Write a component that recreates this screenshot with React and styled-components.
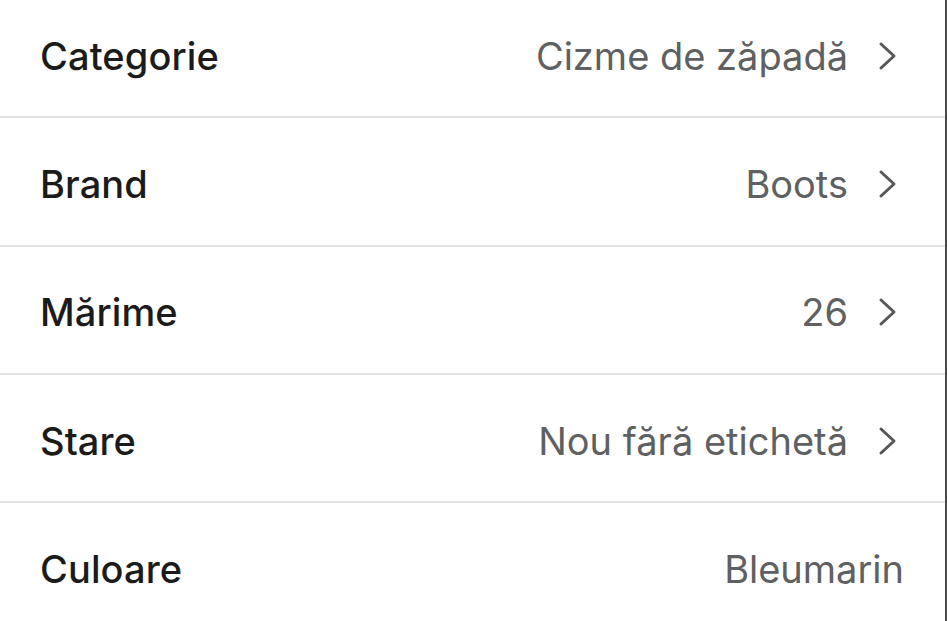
import React from 'react';
import styled, { createGlobalStyle } from 'styled-components';

const Global = createGlobalStyle`
  html, body {
    margin: 0;
    padding: 0;
    background: #ffffff;
    overflow: hidden;
  }
  body {
    font-family: Inter, "Noto Sans", "Liberation Sans", sans-serif;
  }
`;

const Screen = styled.div`
  width: 947px;
  height: 621px;
  overflow: hidden;
  background: #ffffff;
  border-right: 2px solid #4a4a4a;
  box-sizing: border-box;
`;

const List = styled.div`
  display: flex;
  flex-direction: column;
  margin-top: -10px;
`;

const Row = styled.div`
  display: flex;
  align-items: center;
  justify-content: space-between;
  box-sizing: border-box;
  height: 128.33px;
  padding: 5px ${(p) => (p.$arrow ? '48px' : '41px')} 0 40px;
  border-bottom: 2px solid ${(p) => (p.$last ? 'transparent' : '#e2e2e2')};
`;

const Label = styled.span`
  font-size: 38px;
  font-weight: 500;
  color: #1b1b1b;
  letter-spacing: 0.1px;
`;

const Value = styled.span`
  display: flex;
  align-items: center;
  gap: 30px;
  font-size: 38px;
  font-weight: 400;
  color: #5e6062;
`;

const Chevron = () => (
  <svg width="19" height="30" viewBox="0 0 19 30" fill="none">
    <path
      d="M3 3 L16 15 L3 27"
      stroke="#555759"
      strokeWidth="3"
      strokeLinecap="round"
      strokeLinejoin="round"
    />
  </svg>
);

const rows = [
  { label: 'Categorie', value: 'Cizme de zăpadă', arrow: true },
  { label: 'Brand', value: 'Boots', arrow: true },
  { label: 'Mărime', value: '26', arrow: true },
  { label: 'Stare', value: 'Nou fără etichetă', arrow: true },
  { label: 'Culoare', value: 'Bleumarin', arrow: false },
];

export default function App() {
  return (
    <Screen>
      <Global />
      <List>
        {rows.map((r, i) => (
          <Row key={r.label} $arrow={r.arrow} $last={i === rows.length - 1}>
            <Label>{r.label}</Label>
            <Value>
              {r.value}
              {r.arrow && <Chevron />}
            </Value>
          </Row>
        ))}
      </List>
    </Screen>
  );
}
